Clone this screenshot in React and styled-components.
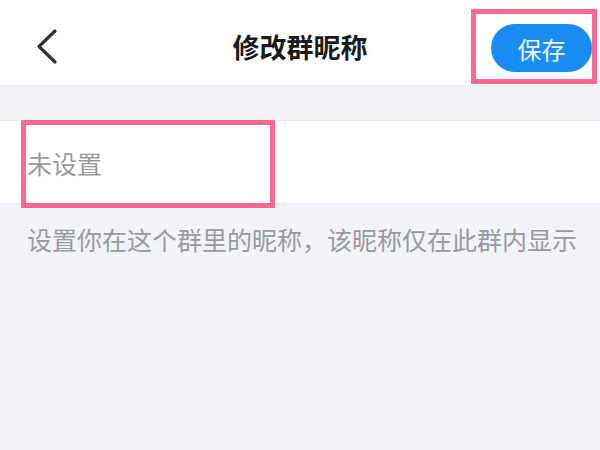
import React from 'react';
import styled, { createGlobalStyle } from 'styled-components';

const Global = createGlobalStyle`
  html, body { margin: 0; padding: 0; background: #f2f3f7; }
  body { font-family: "Noto Sans CJK SC", "Noto Sans", sans-serif; }
  * { box-sizing: border-box; }
`;

const Page = styled.div`
  width: 600px;
  height: 450px;
  overflow: hidden;
  background: #f2f3f7;
`;

///////// header //////////
const Header = styled.div`
  height: 86px;
  padding-top: 8px;
  background: #ffffff;
  border-bottom: 1px solid #e6e7ea;
  display: grid;
  grid-template-columns: 1fr auto 1fr;
  align-items: center;
`;

const Back = styled.div`
  padding-left: 36px;
  display: flex;
  align-items: center;
`;

const Title = styled.div`
  font-size: 27px;
  font-weight: 700;
  color: #1b1b1b;
  letter-spacing: 0;
`;

const Right = styled.div`
  display: flex;
  justify-content: flex-end;
  padding-right: 3px;
`;

// pink annotation frame drawn over the screenshot
const Mark = styled.div`
  border: 5px solid #ff6890;
  padding: ${p => p.pad || '0'};
`;

const SaveButton = styled.button`
  width: 101px;
  height: 48px;
  border: none;
  border-radius: 24px;
  background: #198cf5;
  color: #eef6ff;
  font-family: inherit;
  font-size: 24px;
  letter-spacing: 0;
  cursor: pointer;
  display: flex;
  align-items: center;
  justify-content: center;
`;

///////// body //////////
const Gap = styled.div`
  height: 34px;
`;

const Field = styled.div`
  position: relative;
  height: 84px;
  background: #ffffff;
  border-top: 1px solid #e6e7ea;
  border-bottom: 1px solid #e6e7ea;
  padding-left: 27px;
  display: flex;
  align-items: center;
`;

const Placeholder = styled.span`
  font-size: 25px;
  color: #9a9a9a;
  margin-top: 2px;
`;

const FieldMark = styled(Mark)`
  position: absolute;
  left: 21px;
  top: -1px;
  width: 254px;
  height: 88px;
`;

const Hint = styled.div`
  padding: 20px 0 0 27px;
  font-size: 25px;
  line-height: 30px;
  color: #9a9a9e;
  white-space: nowrap;
`;

const Chevron = () => (
  <svg width="22" height="36" viewBox="0 0 22 36">
    <polyline points="19,2 3,17.5 19,33" fill="none" stroke="#303133" strokeWidth="3.2" strokeLinecap="round" strokeLinejoin="round" />
  </svg>
);

export default function App() {
  return (
    <Page>
      <Global />
      <Header>
        <Back><Chevron /></Back>
        <Title>修改群昵称</Title>
        <Right>
          <Mark pad="10px 0 7px 15px">
            <SaveButton>保存</SaveButton>
          </Mark>
        </Right>
      </Header>
      <Gap />
      <Field>
        <Placeholder>未设置</Placeholder>
        <FieldMark />
      </Field>
      <Hint>设置你在这个群里的昵称，该昵称仅在此群内显示</Hint>
    </Page>
  );
}
